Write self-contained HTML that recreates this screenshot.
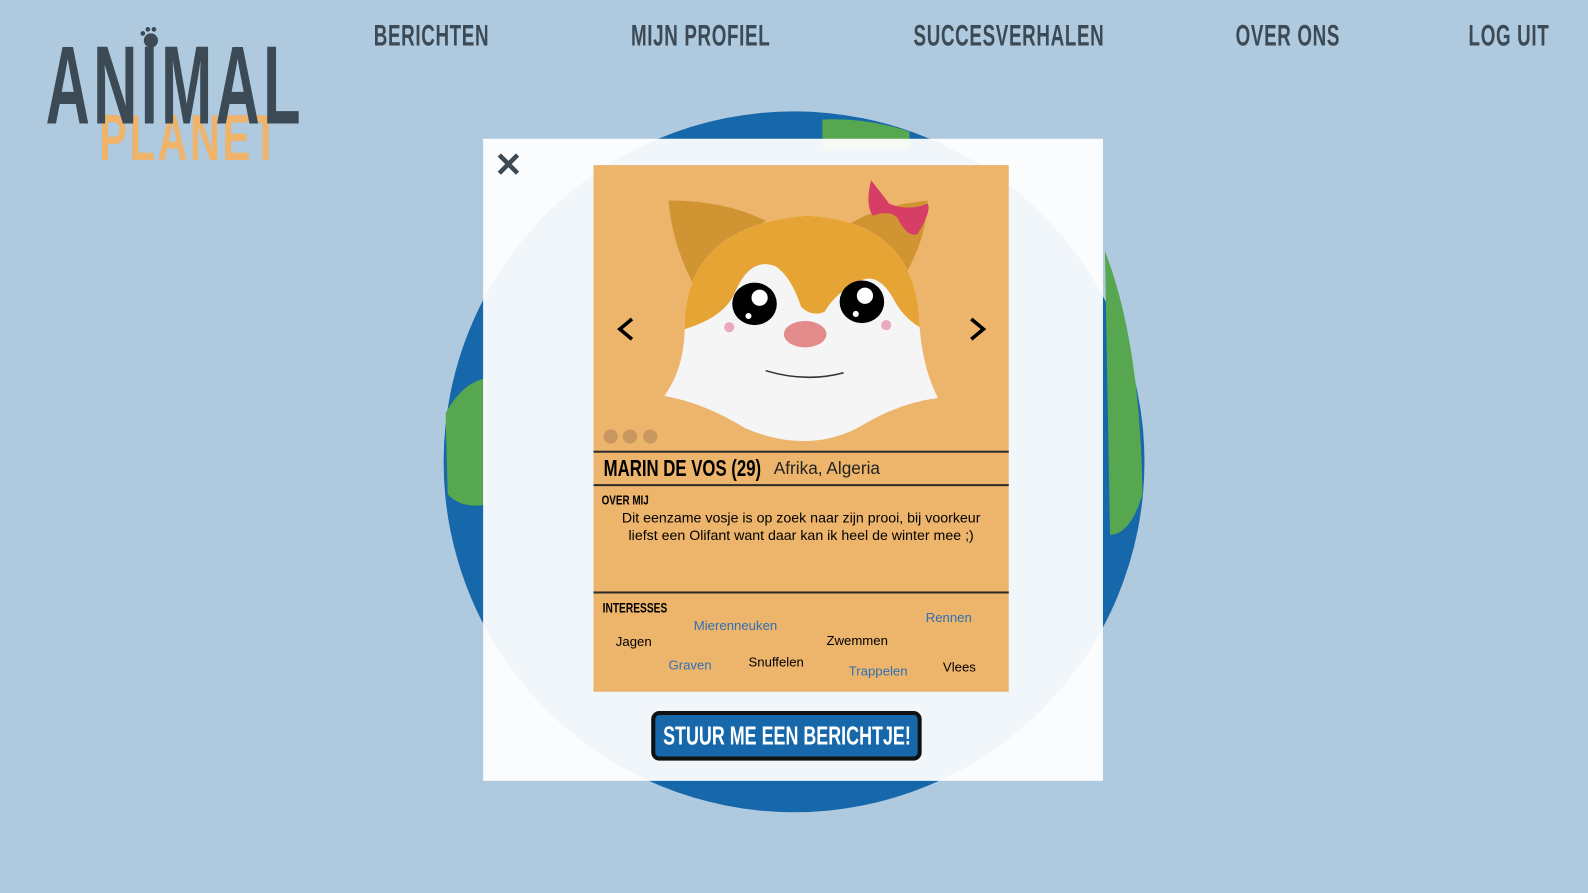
<!DOCTYPE html>
<html><head><meta charset="utf-8"><style>
body{margin:0;width:1588px;height:893px;background:#afc9de;overflow:hidden;font-family:"Liberation Sans",sans-serif}
#w{position:relative;width:1568px;height:882px;transform:scale(1.0128);transform-origin:0 0}
.nav{position:absolute;top:20px;font-size:29px;color:#3b4a55;font-weight:bold;letter-spacing:1px;transform:scaleX(.64);transform-origin:left top;white-space:nowrap}
.logo{position:absolute;font-weight:bold;white-space:nowrap;transform-origin:left top}
.modal{position:absolute;left:477px;top:137px;width:612px;height:634px;background:rgba(255,255,255,.94)}
.card{position:absolute;left:586px;top:163px;width:410px;height:520px;background:#edb46c}
.line{position:absolute;left:0;width:410px;height:2px;background:#2c2c2c}
.t{position:absolute;white-space:nowrap;font-size:13px}
.b{color:#2f6fb4}
</style></head><body><div id="w">
<div class="logo" style="left:98px;top:104px;font-size:64px;color:#efb36a;transform:scaleX(.64);letter-spacing:4px;line-height:64px">PLANET</div>
<svg style="position:absolute;left:136px;top:25px" width="25" height="25"><circle cx="13" cy="15" r="7" fill="#3b4a55"/><circle cx="5" cy="8" r="2.3" fill="#3b4a55"/><circle cx="10" cy="4" r="2.3" fill="#3b4a55"/><circle cx="16" cy="4" r="2.3" fill="#3b4a55"/></svg>
<div class="logo" style="left:45px;top:30px;font-size:110px;color:#3b4a55;transform:scaleX(.55);letter-spacing:6px;line-height:110px">ANIMAL</div>
<div class="nav" style="left:369px">BERICHTEN</div>
<div class="nav" style="left:623px">MIJN PROFIEL</div>
<div class="nav" style="left:902px">SUCCESVERHALEN</div>
<div class="nav" style="left:1220px">OVER ONS</div>
<div class="nav" style="left:1450px">LOG UIT</div>
<svg style="position:absolute;left:436px;top:108px" width="696" height="696"><circle cx="348" cy="348" r="346" fill="#1668ab"/><path d="M376 10 Q420 8 462 22 L462 40 L376 40Z" fill="#56a74f"/><path d="M655 140 Q690 230 692 380 Q680 420 660 420Z" fill="#56a74f"/><path d="M4 300 Q20 270 45 265 L45 390 Q20 395 6 380Z" fill="#56a74f"/></svg>
<div class="modal"></div>
<svg style="position:absolute;left:490px;top:150px" width="24" height="24"><path d="M3 3L21 21M21 3L3 21" stroke="#3b4a55" stroke-width="4.5"/></svg>
<div class="card">
<svg width="410" height="283" style="position:absolute;left:0;top:0">
<path d="M74 35 Q130 35 170 55 L100 120 Q78 80 74 35Z" fill="#d09432"/>
<path d="M330 35 Q280 40 250 60 L300 120 Q328 80 330 35Z" fill="#d09432"/>
<path d="M90 160 Q90 60 210 50 Q320 55 322 160 Q325 200 340 230 Q300 235 260 260 Q210 285 150 260 Q110 235 70 228 Q90 200 90 160Z" fill="#f5f5f5"/>
<path d="M90 160 Q90 60 210 50 Q320 55 322 160 Q305 150 295 130 Q280 105 262 115 Q240 125 228 145 Q215 150 205 140 Q195 110 180 100 Q155 90 140 125 Q130 150 90 162Z" fill="#e6a434"/>
<ellipse cx="159" cy="137" rx="22" ry="21" fill="#000"/><circle cx="164" cy="131" r="8" fill="#fff"/><circle cx="153" cy="149" r="3" fill="#fff"/>
<ellipse cx="265" cy="135" rx="22" ry="21" fill="#000"/><circle cx="268" cy="129" r="8" fill="#fff"/><circle cx="259" cy="147" r="3" fill="#fff"/>
<circle cx="134" cy="160" r="5" fill="#eaa9be"/><circle cx="289" cy="158" r="5" fill="#eaa9be"/>
<ellipse cx="209" cy="167" rx="21" ry="13" fill="#e38a8a"/>
<path d="M170 203 Q210 215 247 205" stroke="#333" stroke-width="1.5" fill="none"/>
<path d="M274 15 Q268 40 276 50 Q292 44 300 52 Q310 72 320 68 Q334 45 330 38 Q310 46 292 38 Q282 25 274 15Z" fill="#d63e65"/>
<path d="M38 152 L26 162 L38 172" stroke="#000" stroke-width="3.5" fill="none"/><path d="M373 152 L385 162 L373 172" stroke="#000" stroke-width="3.5" fill="none"/>
<circle cx="17" cy="268" r="7" fill="#c89660"/><circle cx="36" cy="268" r="7" fill="#c89660"/><circle cx="56" cy="268" r="7" fill="#c89660"/>
</svg>
<div class="line" style="top:282px"></div>
<div class="t" style="left:10px;top:286px;font-size:23px;font-weight:bold;transform:scaleX(.72);transform-origin:left">MARIN DE VOS (29)</div>
<div class="t" style="left:178px;top:290px;font-size:17px;color:#222">Afrika, Algeria</div>
<div class="line" style="top:315px"></div>
<div class="t" style="left:8px;top:323px;font-size:13px;font-weight:bold;transform:scaleX(.75);transform-origin:left">OVER MIJ</div>
<div class="t" style="left:0;width:410px;text-align:center;top:340px;line-height:17px;font-size:14px">Dit eenzame vosje is op zoek naar zijn prooi, bij voorkeur<br>liefst een Olifant want daar kan ik heel de winter mee ;)</div>
<div class="line" style="top:421px"></div>
<div class="t" style="left:9px;top:429px;font-size:14px;font-weight:bold;transform:scaleX(.72);transform-origin:left">INTERESSES</div>
<div class="t b" style="left:99px;top:447px">Mierenneuken</div>
<div class="t b" style="left:328px;top:439px">Rennen</div>
<div class="t" style="left:22px;top:463px">Jagen</div>
<div class="t" style="left:230px;top:462px">Zwemmen</div>
<div class="t b" style="left:74px;top:486px">Graven</div>
<div class="t" style="left:153px;top:483px">Snuffelen</div>
<div class="t b" style="left:252px;top:492px">Trappelen</div>
<div class="t" style="left:345px;top:488px">Vlees</div>
</div>
<div style="position:absolute;left:643px;top:702px;width:259px;height:41px;background:#1668ab;border:4px solid #111;border-radius:8px;color:#fff;font-size:26px;font-weight:bold;line-height:41px;white-space:nowrap"><span style="position:absolute;left:50%;top:0;width:max-content;transform:translateX(-50%) scaleX(.68)">STUUR ME EEN BERICHTJE!</span></div>
</div></body></html>
